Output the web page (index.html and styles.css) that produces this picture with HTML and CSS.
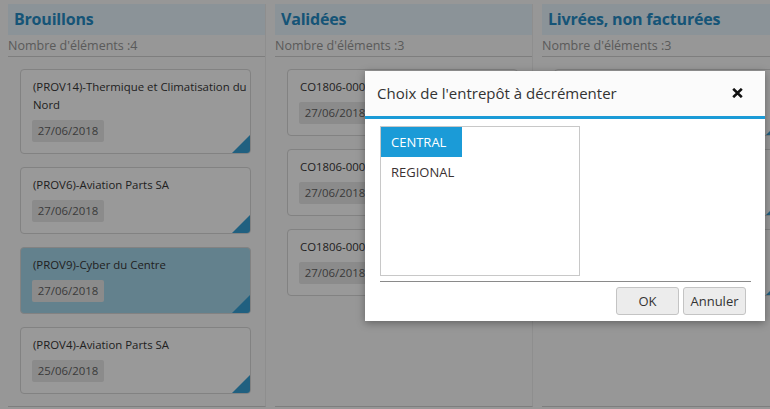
FILE: index.html
```html
<!DOCTYPE html>
<html lang="fr">
<head>
<meta charset="utf-8">
<title>Tableau</title>
<link rel="stylesheet" href="styles.css">
</head>
<body>
<div class="board">
  <section class="col">
    <h2 class="col-head">Brouillons</h2>
    <div class="count">Nombre d'éléments :4</div>
    <div class="cards">
      <div class="card"><p class="card-title">(PROV14)-Thermique et Climatisation du Nord</p><span class="date">27/06/2018</span><i class="corner"></i></div>
      <div class="card"><p class="card-title">(PROV6)-Aviation Parts SA</p><span class="date">27/06/2018</span><i class="corner"></i></div>
      <div class="card card-sel"><p class="card-title">(PROV9)-Cyber du Centre</p><span class="date">27/06/2018</span><i class="corner"></i></div>
      <div class="card"><p class="card-title">(PROV4)-Aviation Parts SA</p><span class="date">25/06/2018</span><i class="corner"></i></div>
    </div>
  </section>
  <section class="col">
    <h2 class="col-head">Validées</h2>
    <div class="count">Nombre d'éléments :3</div>
    <div class="cards">
      <div class="card"><p class="card-title">CO1806-0004-Client</p><span class="date">27/06/2018</span><i class="corner"></i></div>
      <div class="card"><p class="card-title">CO1806-0007-Client</p><span class="date">27/06/2018</span><i class="corner"></i></div>
      <div class="card"><p class="card-title">CO1806-0009-Client</p><span class="date">27/06/2018</span><i class="corner"></i></div>
    </div>
  </section>
  <section class="col">
    <h2 class="col-head">Livrées, non facturées</h2>
    <div class="count">Nombre d'éléments :3</div>
    <div class="cards">
      <div class="card"><p class="card-title">CO1806-0001-Client</p><span class="date">27/06/2018</span><i class="corner"></i></div>
      <div class="card"><p class="card-title">CO1806-0002-Client</p><span class="date">27/06/2018</span><i class="corner"></i></div>
      <div class="card"><p class="card-title">CO1806-0003-Client</p><span class="date">27/06/2018</span><i class="corner"></i></div>
    </div>
  </section>
</div>

<div class="overlay"></div>

<div class="dialog" role="dialog">
  <div class="dlg-head">
    <span class="dlg-title">Choix de l'entrepôt à décrémenter</span>
    <svg class="dlg-close" width="11" height="10" viewBox="0 0 11 10"><path d="M1.2 0.8 L9.8 9.2 M9.8 0.8 L1.2 9.2" stroke="#111" stroke-width="2.6" fill="none"/></svg>
  </div>
  <div class="dlg-body">
    <div class="listbox">
      <div class="opt opt-sel">CENTRAL</div>
      <div class="opt">REGIONAL</div>
    </div>
    <div class="dlg-foot">
      <button class="btn">OK</button>
      <button class="btn">Annuler</button>
    </div>
  </div>
</div>
</body>
</html>
```

FILE: styles.css
```css
* { box-sizing: border-box; }
html, body { margin: 0; padding: 0; }
body {
  width: 770px;
  height: 409px;
  overflow: hidden;
  background: #ececec;
  font-family: "Open Sans", "Noto Sans", sans-serif;
  color: #333;
  position: relative;
}
.board {
  display: flex;
  gap: 9px;
  padding: 4px 0 0 8px;
}
.col {
  width: 258px;
  flex-shrink: 0;
  border-right: 1px solid #dedede;
  border-bottom: 1px solid #c6c6c6;
}
.col-head {
  margin: 0;
  height: 31px;
  line-height: 30px;
  padding-left: 6px;
  background: #dae7ee;
  color: #2384ba;
  font-size: 16px;
  font-weight: 700;
  letter-spacing: -0.2px;
}
.count {
  height: 22px;
  line-height: 22px;
  font-size: 12.5px;
  color: #8e8e8e;
  border-bottom: 1px solid #c6c6c6;
}
.cards {
  display: flex;
  flex-direction: column;
  gap: 13px;
  padding: 12px 14px 12px 12px;
}
.card {
  position: relative;
  overflow: hidden;
  display: flex;
  flex-direction: column;
  align-items: flex-start;
  border: 1px solid #cbcbcb;
  border-radius: 4px;
  background: #f0f0f0;
  padding: 8px 2px 11px 12px;
}
.card-sel { background: #9ccadd; }
.card-title {
  margin: 0 0 6px;
  font-size: 11.4px;
  line-height: 18px;
  color: #333;
}
.date {
  display: block;
  width: 72px;
  height: 22px;
  line-height: 22px;
  text-align: center;
  background: #dadada;
  border-radius: 2px;
  font-size: 11.4px;
  color: #5c5c5c;
  margin-left: -1px;
}
.corner {
  position: absolute;
  right: 0;
  bottom: 0;
  width: 0;
  height: 0;
  border-style: solid;
  border-width: 0 0 18px 18px;
  border-color: transparent transparent #3396c8 transparent;
}
.overlay {
  position: absolute;
  inset: 0;
  background: rgba(0, 0, 0, 0.36);
}
.dialog {
  position: absolute;
  left: 365px;
  top: 71px;
  width: 400px;
  height: 250px;
  background: #fff;
  box-shadow: 0 2px 8px rgba(0, 0, 0, 0.35);
  display: flex;
  flex-direction: column;
}
.dlg-head {
  height: 48px;
  border-bottom: 3px solid #1b9bd7;
  background: #fbfbfb;
  display: flex;
  align-items: center;
  justify-content: space-between;
  padding: 0 22px 2px 12px;
}
.dlg-title {
  font-size: 15px;
  color: #333;
}
.dlg-close { display: block; }
.dlg-body {
  padding: 7px 14px 6px 15px;
}
.listbox {
  width: 200px;
  height: 150px;
  border: 1px solid #c8c8c8;
}
.opt {
  height: 30px;
  line-height: 30px;
  padding: 0 10px;
  font-size: 13px;
  color: #3a3232;
}
.opt-sel {
  display: inline-block;
  width: 81px;
  background: #1b9bd7;
  color: #fff;
}
.dlg-foot {
  margin-top: 5px;
  border-top: 1px solid #8a8a8a;
  padding: 5px 5px 0 0;
  display: flex;
  justify-content: flex-end;
  gap: 4px;
}
.btn {
  width: 63px;
  height: 28px;
  border: 1px solid #c4c4c4;
  border-radius: 3px;
  background: #ececec;
  font-family: inherit;
  font-size: 13px;
  color: #333;
  padding: 0;
}
```
